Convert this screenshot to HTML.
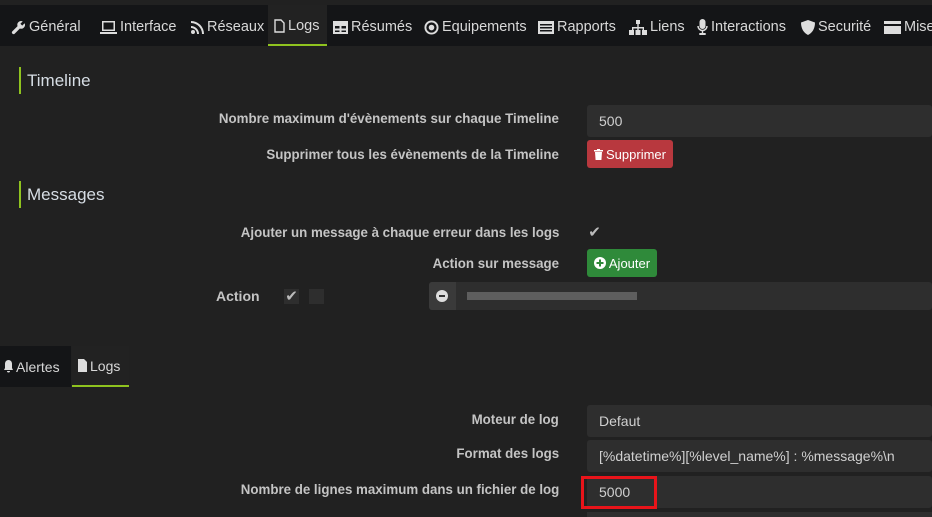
<!DOCTYPE html>
<html><head><meta charset="utf-8"><style>
*{margin:0;padding:0;box-sizing:border-box}
body{width:932px;height:517px;overflow:hidden;background:#212121;font-family:"Liberation Sans",sans-serif;color:#cfcfcf;position:relative}
.abs{position:absolute}
.nav{left:0;top:5px;width:932px;height:41px;background:#141517}
.ni{position:absolute;top:0;height:41px;padding-top:3px;font-size:14.5px;color:#d8d8d8;white-space:nowrap;display:flex;align-items:center;gap:3px}
.ni svg{fill:#ddd}
.act{background:#222;border-bottom:2px solid #8fc31f}
.h{font-size:17px;color:#d6dde4;border-left:2px solid #8fc31f;padding-left:6px;height:27px;line-height:27px}
.lbl{font-size:14px;font-weight:bold;color:#c4c4c4;text-align:right;transform:scaleX(.95);transform-origin:right center;white-space:nowrap}
.inp{background:#2e2e2e;border-radius:3px;font-size:14px;color:#d0d0d0;padding-left:12px;display:flex;align-items:center}
.btn{border-radius:3px;font-size:13px;color:#fff;display:flex;align-items:center;justify-content:center;gap:3px}
.cb{width:15px;height:15px;background:#2e2e2e;color:#bbb;font-size:15px;line-height:15px;text-align:center}
</style></head><body>
<div class="abs nav">
 <div class="ni" style="left:11px"><svg width="15" height="15" viewBox="0 0 16 16"><path d="M14.5 3.5l-2.5 2.5-2-2 2.5-2.5A4 4 0 0 0 7 6.5L1.5 12a1.4 1.4 0 0 0 2.5 2.5L9.5 9a4 4 0 0 0 5-5.5z"/></svg>Général</div>
 <div class="ni" style="left:100px"><svg width="17" height="15" viewBox="0 0 17 15"><path d="M2 1h13v10H2zM3.5 2.5v7h10v-7zM0 12h17v2H0z" fill-rule="evenodd"/></svg>Interface</div>
 <div class="ni" style="left:191px"><svg width="13" height="13" viewBox="0 0 13 13"><circle cx="2" cy="11" r="2"/><path d="M0 5a8 8 0 0 1 8 8H6A6 6 0 0 0 0 7zM0 0a13 13 0 0 1 13 13h-2A11 11 0 0 0 0 2z"/></svg>Réseaux</div>
 <div class="ni act" style="left:268px;width:59px;padding-left:6px"><svg width="11" height="14" viewBox="0 0 11 14"><path d="M1 1h6l3 3v9H1z" fill="none" stroke="#ddd" stroke-width="1.4"/></svg>Logs</div>
 <div class="ni" style="left:333px"><svg width="15" height="13" viewBox="0 0 15 13"><path d="M0 0h15v13H0zM2 5v2.5h4.5V5zM8.5 5v2.5H13V5zM2 9.5V11h4.5V9.5zM8.5 9.5V11H13V9.5z" fill-rule="evenodd"/></svg>Résumés</div>
 <div class="ni" style="left:424px"><svg width="15" height="15" viewBox="0 0 16 16"><circle cx="8" cy="8" r="6.5" fill="none" stroke="#ddd" stroke-width="2"/><circle cx="8" cy="8" r="3"/></svg>Equipements</div>
 <div class="ni" style="left:538px"><svg width="16" height="13" viewBox="0 0 16 13"><path d="M0 0h16v13H0zM2 3v1.5h12V3zM2 6v1.5h12V6zM2 9v1.5h12V9z" fill-rule="evenodd"/></svg>Rapports</div>
 <div class="ni" style="left:629px"><svg width="18" height="15" viewBox="0 0 18 15"><path d="M7 0h4v4H7zM8.3 4h1.4v3H15v3h-1.4V8.5H9.7V10H8.3V8.5H4.4V10H3V7h5.3zM0 10h5v5H0zM6.5 10h5v5h-5zM13 10h5v5h-5z"/></svg>Liens</div>
 <div class="ni" style="left:697px"><svg width="11" height="16" viewBox="0 0 11 16"><rect x="2.5" y="0" width="6" height="10" rx="3"/><path d="M1 7a4.5 4.5 0 0 0 9 0" fill="none" stroke="#ddd" stroke-width="1.5"/><path d="M4.8 11h1.4v3h2.5v2H2.3v-2h2.5z"/></svg>Interactions</div>
 <div class="ni" style="left:801px"><svg width="14" height="15" viewBox="0 0 14 15"><path d="M7 0l7 2.5C14 9 11 13 7 15 3 13 0 9 0 2.5z"/></svg>Securité</div>
 <div class="ni" style="left:884px"><svg width="17" height="13" viewBox="0 0 17 13"><path d="M0 0h17v3H0zM0 5h17v8H0z"/></svg>Mise</div>
</div>

<div class="abs h" style="left:19px;top:67px">Timeline</div>
<div class="abs lbl" style="right:373px;top:110px">Nombre maximum d'évènements sur chaque Timeline</div>
<div class="abs inp" style="left:587px;top:105px;width:345px;height:32px">500</div>
<div class="abs lbl" style="right:373px;top:146px">Supprimer tous les évènements de la Timeline</div>
<div class="abs btn" style="left:587px;top:140px;width:86px;height:28px;background:#b8383e"><svg width="9" height="11" viewBox="0 0 9 11"><path d="M0 1h9v1.5H0zM3 0h3v1H3zM1 3h7l-.6 8H1.6z" fill="#fff"/></svg>Supprimer</div>

<div class="abs h" style="left:19px;top:181px">Messages</div>
<div class="abs lbl" style="right:373px;top:224px">Ajouter un message à chaque erreur dans les logs</div>
<div class="abs cb" style="left:587px;top:225px;background:none">✔</div>
<div class="abs lbl" style="right:373px;top:255px">Action sur message</div>
<div class="abs btn" style="left:587px;top:249px;width:70px;height:28px;background:#2f8a3a"><svg width="12" height="12" viewBox="0 0 12 12"><circle cx="6" cy="6" r="6" fill="#fff"/><path d="M5 2.5h2v2.5h2.5v2H7v2.5H5V7H2.5V5H5z" fill="#2f8a3a"/></svg>Ajouter</div>
<div class="abs lbl" style="left:216px;top:288px;transform:none">Action</div>
<div class="abs cb" style="left:284px;top:289px">✔</div>
<div class="abs cb" style="left:309px;top:289px"></div>
<div class="abs" style="left:429px;top:282px;width:503px;height:28px;background:#2e2e2e;border-radius:3px"></div>
<div class="abs" style="left:429px;top:282px;width:27px;height:28px;background:#3a3a3a;border-radius:3px 0 0 3px"></div>
<div class="abs" style="left:436px;top:290px;width:12px;height:12px;border-radius:50%;background:#ddd"></div>
<div class="abs" style="left:439px;top:295px;width:6px;height:2px;background:#333"></div>
<div class="abs" style="left:467px;top:292px;width:170px;height:8px;background:#6a6a6a;opacity:.8"></div>

<div class="abs" style="left:0;top:346px;width:71px;height:41px;background:#141517"></div>
<div class="abs ni" style="left:4px;top:346px;font-size:14px;padding-top:0"><svg width="9" height="13" viewBox="0 0 9 13"><path d="M4.5 0A3.5 3.5 0 0 1 8 3.5V8l1 2H0l1-2V3.5A3.5 3.5 0 0 1 4.5 0zM3 11h3a1.5 1.5 0 0 1-3 0z" fill="#ddd"/></svg>Alertes</div>
<div class="abs ni act" style="left:72px;top:346px;width:57px;padding-left:6px;padding-top:0;font-size:14px"><svg width="9" height="13" viewBox="0 0 9 13"><path d="M0 0h6l3 3v10H0z" fill="#ddd"/></svg>Logs</div>

<div class="abs lbl" style="right:373px;top:411px">Moteur de log</div>
<div class="abs inp" style="left:587px;top:405px;width:345px;height:32px">Defaut</div>
<div class="abs lbl" style="right:373px;top:445px">Format des logs</div>
<div class="abs inp" style="left:587px;top:440px;width:345px;height:32px">[%datetime%][%level_name%] : %message%\n</div>
<div class="abs lbl" style="right:373px;top:481px">Nombre de lignes maximum dans un fichier de log</div>
<div class="abs inp" style="left:587px;top:476px;width:345px;height:32px">5000</div>
<div class="abs" style="left:581px;top:476px;width:76px;height:33px;border:3px solid #e8141a"></div>
<div class="abs" style="left:587px;top:512px;width:345px;height:5px;background:#2e2e2e"></div>
</body></html>
